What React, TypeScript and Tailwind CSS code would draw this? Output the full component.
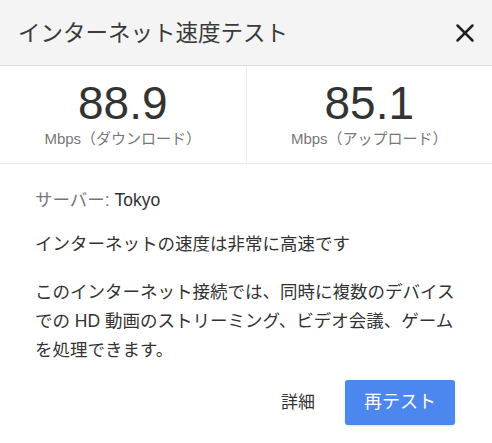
import { X } from "lucide-react";

const font = {
  fontFamily: '"Liberation Sans", "Noto Sans CJK JP", sans-serif',
};

function Stat({ value, label }: { value: string; label: string }) {
  return (
    <div className="flex flex-1 flex-col items-center pt-[11px]">
      <div className="text-[46px] leading-[53px] text-[#333333]">{value}</div>
      <div className="text-[15px] leading-[17px] text-[#777777]">{label}</div>
    </div>
  );
}

export default function App() {
  return (
    <div className="h-[443px] w-[492px] overflow-hidden bg-white" style={font}>
      {/* Header */}
      <div className="flex h-[66px] items-center justify-between border-b border-[#dcdcdc] bg-[#f4f4f4] pl-[18px] pr-[12px]">
        <h1 className="mt-[3px] text-[22.5px] font-normal text-[#3a3a3a]">インターネット速度テスト</h1>
        <X className="h-[30px] w-[30px] text-[#222222]" strokeWidth={2} />
      </div>

      {/* Stats */}
      <div className="flex h-[98px] border-b border-[#e8e8e8]">
        <Stat value="88.9" label="Mbps（ダウンロード）" />
        <div className="w-px bg-[#ececec]" />
        <Stat value="85.1" label="Mbps（アップロード）" />
      </div>

      {/* Body */}
      <div className="px-[35px] pt-[22px] text-[17.5px] leading-[29px] text-[#333333]">
        <p>
          <span className="text-[#777777]">サーバー: </span>Tokyo
        </p>
        <p className="mt-[15px]">インターネットの速度は非常に高速です</p>
        <p className="mt-[19px]">
          このインターネット接続では、同時に複数のデバイスでの HD 動画のストリーミング、ビデオ会議、ゲームを処理できます。
        </p>

        <div className="mt-[15px] flex items-center justify-end gap-[30px] pr-[2px]">
          <button className="text-[17px] text-[#333333]">詳細</button>
          <button className="h-[45px] w-[110px] rounded-[3px] bg-[#4b87ee] text-[18px] text-white shadow-sm">
            再テスト
          </button>
        </div>
      </div>
    </div>
  );
}
